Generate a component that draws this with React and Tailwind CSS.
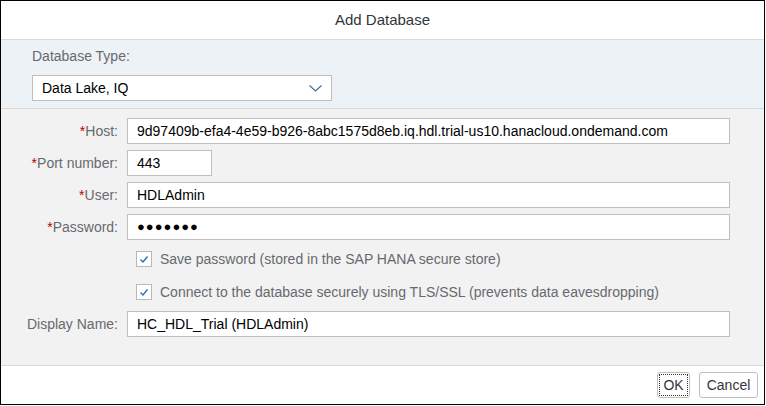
import React from 'react';

const font = { fontFamily: '"Liberation Sans", Arial, sans-serif' };

const Field = ({ label, required, value, width, isPassword }) => (
  <div className="flex items-center h-[26px]">
    <div className="w-[117px] text-right text-[14px] text-[#666a6e]">
      {required && <span className="text-[#bb0000]">*</span>}
      {label}:
    </div>
    <div
      className={`ml-[9px] h-[26px] bg-white border border-[#bfbfbf] flex items-center pl-[9px] text-[14px] text-black ${width}`}
    >
      {isPassword ? <span className="tracking-[1px] text-[13px]">●●●●●●●</span> : value}
    </div>
  </div>
);

const Check = ({ label }) => (
  <div className="flex items-center h-[16px] pl-[135px]">
    <div className="w-[16px] h-[16px] border border-[#b8b8b8] bg-white flex items-center justify-center">
      <svg width="10" height="9" viewBox="0 0 10 9">
        <path d="M1.5 4.5 L4 7 L8.5 1.5" fill="none" stroke="#2f6eb5" strokeWidth="1.4" />
      </svg>
    </div>
    <span className="ml-[8px] text-[14px] text-[#666a6e]">{label}</span>
  </div>
);

export default function App() {
  return (
    <div className="w-[766px] h-[406px] bg-white" style={font}>
      <div className="w-[765px] h-[405px] border border-black flex flex-col">
        {/* Title */}
        <div className="h-[39px] flex items-center justify-center text-[15px] text-[#32363a] border-b border-[#d9d9d9]">
          Add Database
        </div>

        {/* Database type */}
        <div className="h-[69px] bg-[#edf2f7] border-b border-[#d9d9d9] pl-[31px] pt-[7px]">
          <div className="h-[18px] text-[14px] text-[#666a6e] leading-[18px]">Database Type:</div>
          <div className="mt-[10px] w-[300px] h-[26px] bg-white border border-[#bfbfbf] flex items-center justify-between pl-[9px] pr-[9px] text-[14px] text-black">
            <span>Data Lake, IQ</span>
            <svg width="13" height="7" viewBox="0 0 13 7">
              <path d="M0.5 0.5 L6.5 6 L12.5 0.5" fill="none" stroke="#4a6b8f" strokeWidth="1.2" />
            </svg>
          </div>
        </div>

        {/* Form */}
        <div className="flex-1 bg-[#f2f2f2] pt-[9px] flex flex-col">
          <div className="flex flex-col gap-[6px]">
            <Field label="Host" required width="w-[603px]" value="9d97409b-efa4-4e59-b926-8abc1575d8eb.iq.hdl.trial-us10.hanacloud.ondemand.com" />
            <Field label="Port number" required width="w-[85px]" value="443" />
            <Field label="User" required width="w-[603px]" value="HDLAdmin" />
            <Field label="Password" required width="w-[603px]" isPassword />
          </div>
          <div className="mt-[11px] flex flex-col gap-[17px]">
            <Check label="Save password (stored in the SAP HANA secure store)" />
            <Check label="Connect to the database securely using TLS/SSL (prevents data eavesdropping)" />
          </div>
          <div className="mt-[11px]">
            <Field label="Display Name" width="w-[603px]" value="HC_HDL_Trial (HDLAdmin)" />
          </div>
        </div>

        {/* Footer */}
        <div className="h-[39px] border-t border-[#d9d9d9] bg-white flex items-center justify-end gap-[9px] pr-[6px]">
          <button className="w-[33px] h-[26px] rounded-[3px] border border-[#bfbfbf] bg-white text-[14px] text-[#32363a] flex items-center justify-center">
            <span className="w-[29px] h-[22px] border border-dotted border-[#333] flex items-center justify-center">OK</span>
          </button>
          <button className="w-[59px] h-[26px] rounded-[3px] border border-[#bfbfbf] bg-white text-[14px] text-[#32363a]">
            Cancel
          </button>
        </div>
      </div>
    </div>
  );
}
